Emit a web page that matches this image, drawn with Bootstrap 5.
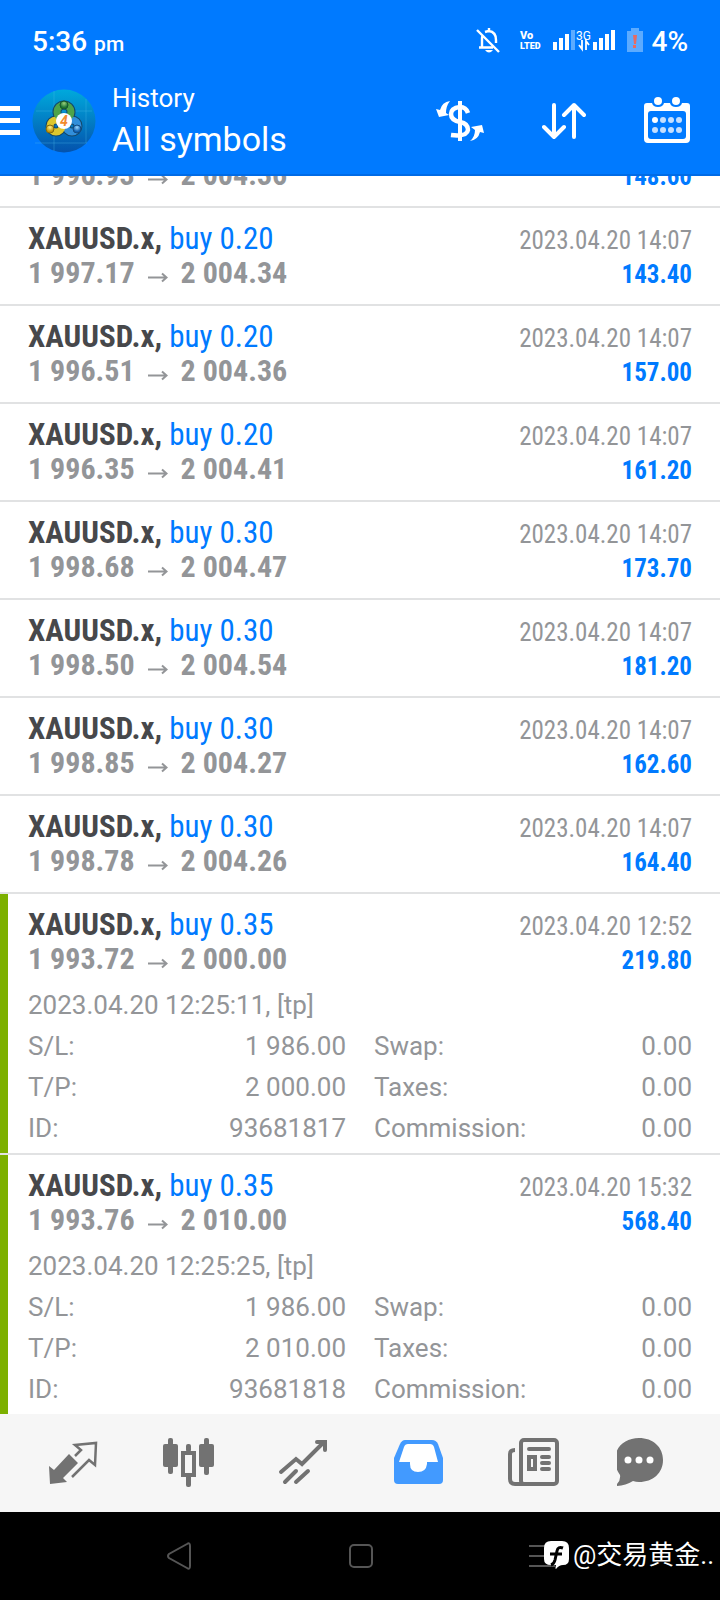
<!DOCTYPE html>
<html lang="en">
<head>
<meta charset="utf-8">
<meta name="viewport" content="width=device-width, initial-scale=1">
<title>History</title>
<link href="https://cdn.jsdelivr.net/npm/bootstrap@5.3.0/dist/css/bootstrap.min.css" rel="stylesheet">
<style>
  body { font-family: Roboto, "Noto Sans CJK SC", sans-serif; color: #939598; background: #fff; }
  svg { display: block; flex: none; }
  button { border: 0; padding: 0; background: none; color: inherit; }

  .app-head { background: #007aff; border-bottom: 2px solid #006be6; }
  .status { padding: 25px 32px 21px; font-size: 28px; line-height: 34px; font-weight: 500; }
  .status small { font-size: 21px; line-height: 1; }
  .titlebar { padding: 0 30px 12px 0; }
  .screen-name { font-size: 26px; line-height: 36px; }
  .filter-name { font-size: 34px; line-height: 46px; }
  .tools { gap: 58px; }

  .deals { flex: 1 1 0; min-height: 0; }
  .deal { border-bottom: 2px solid #e1e2e3; flex: none; }
  .deal:last-child { border-bottom: 0; }
  .deal-body { padding: 14px 28px; }
  .deal-line { font-family: "Roboto Condensed", "Liberation Sans Narrow", Roboto, sans-serif; font-size: 31px; line-height: 34px; height: 34px; }
  .deal-line strong { font-weight: 700; }
  .sym { color: #47484b; }
  .side { color: #007aff; }
  .deal-line .date, .deal-line .gain { font-size: 25px; }
  .gain { color: #007aff; }
  .price { display: flex; align-items: baseline; font-size: 30px; }
  .price svg { margin: 0 13px; }

  .closed-tp { border-left: 8px solid #7cb000; padding: 14px 28px 4px 20px; font-size: 26px; line-height: 41px; }
  .note { margin-top: 8px; line-height: 42px; }
  .facts { display: grid; grid-template-columns: 1fr 1fr; column-gap: 28px; margin: 0; }
  .facts dt { font-weight: 400; }
  .facts dd { margin: 0; }

  .tabs { background: #f6f6f6; padding: 20px 16px; color: #727272; }
  .tabs svg { height: 58px; width: 60px; }
  .tabs .current { color: #429aff; }

  .sys { background: #000; height: 88px; padding: 0 87px; color: #555; }
  .mark-tag { right: 6px; bottom: 25px; font-size: 26px; line-height: 40px; color: #fff; gap: 4px; }
</style>
</head>
<body>
<div class="vh-100 d-flex flex-column overflow-hidden">
  <header class="app-head text-white">
    <div class="status d-flex justify-content-between">
      <div>5:36 <small>pm</small></div>
      <div class="d-flex">
        <svg width="177" height="34" viewBox="474 25 177 34" aria-hidden="true">
          <g fill="none" stroke="#fff" stroke-width="2.4">
            <path d="M477 30 499 52M482 48V38Q482 36 483 35M485 32Q488 31 489 31 496 32 496 40V43M479 47.500H493M489 28V31"/>
          </g>
          <path d="M485 50H493Q489 55 485 50Z" fill="#fff"/>
          <g fill="#fff" font-family="Roboto, sans-serif" font-weight="900">
            <text x="520" y="39" font-size="11">Vo</text>
            <text x="520" y="49" font-size="9">LTED</text>
            <text x="576" y="40" font-size="12" font-weight="400">3G</text>
          </g>
          <path fill="#fff" d="M553 42h4v8h-4zM559 38h4v12h-4zM565 34h4v16h-4zM593 42h4v8h-4zM599 38h4v12h-4zM605 34h4v16h-4zM611 30h4v20h-4z"/>
          <path fill="#5cabff" d="M571 30h4v20h-4zM627 31h4v-3h8v3h4v21h-16z"/>
          <path fill="none" stroke="#fff" stroke-width="1.800" d="M582 40V49L579 45M586 50V41L589 45"/>
          <path fill="#e66b62" d="M633 35h4l-1 9h-2zM633 45h3v3h-3z"/>
        </svg>
        <span>4%</span>
      </div>
    </div>
    <div class="titlebar d-flex align-items-center">
      <button type="button" aria-label="Menu">
        <svg width="32" height="30" viewBox="0 0 32 30"><path fill="#fff" d="M0 0h20v5H0zM0 12h20v5H0zM0 24h20v5H0z"/></svg>
      </button>
      <svg width="64" height="64" viewBox="0 0 64 64" aria-hidden="true">
        <defs>
          <linearGradient id="sky" x1="0" y1="0" x2="0" y2="1"><stop offset="0" stop-color="#00a9dc"/><stop offset="1" stop-color="#0452ac"/></linearGradient>
          <radialGradient id="grn" cy=".3"><stop offset="0" stop-color="#9bd07c"/><stop offset="1" stop-color="#1c7535"/></radialGradient>
          <radialGradient id="yel" cy=".3"><stop offset="0" stop-color="#fff08a"/><stop offset="1" stop-color="#c59a0c"/></radialGradient>
          <radialGradient id="blu" cy=".3"><stop offset="0" stop-color="#9bd8ff"/><stop offset="1" stop-color="#0f62b4"/></radialGradient>
        </defs>
        <circle cx="32" cy="32" r="31.500" fill="url(#sky)"/>
        <path d="M4 22H60M3 54H55M22 2V62M54 10V54" stroke="#4bbbe4" stroke-opacity=".35"/>
        <g fill="none" stroke-width="9" stroke="#15486a">
          <circle cx="32" cy="23" r="7"/><circle cx="24" cy="37" r="6"/><circle cx="40" cy="37" r="6"/>
        </g>
        <circle cx="40" cy="37" r="6" fill="none" stroke="#318fdb" stroke-width="7"/>
        <circle cx="24" cy="37" r="6" fill="none" stroke="#ddc72e" stroke-width="7"/>
        <circle cx="32" cy="23" r="7" fill="none" stroke="#4ea34a" stroke-width="7"/>
        <circle cx="32" cy="16" r="4" fill="url(#grn)" stroke="#17562c"/>
        <circle cx="18" cy="40" r="4" fill="url(#yel)" stroke="#846a10"/>
        <circle cx="45" cy="40" r="4" fill="url(#blu)" stroke="#124b82"/>
        <circle cx="32" cy="32" r="8" fill="#fff"/>
        <text x="32" y="37" text-anchor="middle" font-family="Roboto, sans-serif" font-size="14" font-weight="700" font-style="italic" fill="#f28a2e">4</text>
      </svg>
      <div class="flex-grow-1 ps-3">
        <div class="screen-name">History</div>
        <div class="filter-name">All symbols</div>
      </div>
      <div class="tools d-flex align-items-center">
        <button type="button" aria-label="Currency">
          <svg width="48" height="48" viewBox="436 96 48 48">
            <g fill="none" stroke="#fff">
              <path d="M460 100V140" stroke-width="4"/>
              <path d="M468 112Q466 106 460 106 451 107 451 113C451 118 455 120 460 121 466 122 468 125 468 129 467 135 459 135 451 134 450 127" stroke-width="4.500"/>
            </g>
            <path fill="#fff" d="M450 100Q442 101 440 109L436 108 439 116 449 114 446 112Q446 105 450 100ZM470 140Q478 139 480 131L484 132 482 124 471 126 475 129Q475 136 470 140Z"/>
          </svg>
        </button>
        <button type="button" aria-label="Sort">
          <svg width="44" height="48" viewBox="542 96 44 48"><path fill="none" stroke="#fff" stroke-width="4" stroke-linecap="round" stroke-linejoin="round" d="M554 104V136M544 126 554 136 564 126M574 136V104M564 114 574 104 584 114"/></svg>
        </button>
        <button type="button" aria-label="Period">
          <svg width="46" height="48" viewBox="644 96 46 48">
            <path fill="#fff" fill-rule="evenodd" d="M647 102H652Q653 106 658 106T664 102H670Q671 106 676 106T682 102H687Q690 102 690 105V138Q690 142 686 142H648Q644 142 644 138V105Q644 102 647 102ZM651 110Q648 110 648 113V135Q648 138 651 138H683Q686 138 686 135V113Q686 110 683 110Z"/>
            <circle cx="658" cy="100" r="4" fill="#fff"/><circle cx="676" cy="100" r="4" fill="#fff"/>
            <circle cx="655" cy="119" r="3" fill="#fff"/>
            <g fill="#c4dfff"><circle cx="663" cy="119" r="3"/><circle cx="671" cy="119" r="3"/><circle cx="679" cy="119" r="3"/><circle cx="655" cy="129" r="3"/><circle cx="663" cy="129" r="3"/><circle cx="671" cy="129" r="3"/><circle cx="679" cy="129" r="3"/></g>
          </svg>
        </button>
      </div>
    </div>
  </header>

  <svg class="d-none" aria-hidden="true"><symbol id="to" viewBox="0 0 20 12"><path d="M0 6.500H18M14 2.500 18.500 6.500 14 10.500" fill="none" stroke="#939598" stroke-width="2"/></symbol></svg>

  <!-- Closed deals, scrolled to the newest one -->
  <ul class="deals list-unstyled mb-0 d-flex flex-column justify-content-end overflow-hidden">
    <li class="deal"><div class="deal-body">
      <div class="deal-line d-flex justify-content-between align-items-baseline"><span><strong class="sym">XAUUSD.x,</strong> <span class="side">buy 0.20</span></span><span class="date">2023.04.20 14:07</span></div>
      <div class="deal-line d-flex justify-content-between align-items-baseline"><strong class="price">1 996.93<svg width="20" height="12"><use href="#to"/></svg>2 004.36</strong><strong class="gain">148.60</strong></div>
    </div></li>
    <li class="deal"><div class="deal-body">
      <div class="deal-line d-flex justify-content-between align-items-baseline"><span><strong class="sym">XAUUSD.x,</strong> <span class="side">buy 0.20</span></span><span class="date">2023.04.20 14:07</span></div>
      <div class="deal-line d-flex justify-content-between align-items-baseline"><strong class="price">1 997.17<svg width="20" height="12"><use href="#to"/></svg>2 004.34</strong><strong class="gain">143.40</strong></div>
    </div></li>
    <li class="deal"><div class="deal-body">
      <div class="deal-line d-flex justify-content-between align-items-baseline"><span><strong class="sym">XAUUSD.x,</strong> <span class="side">buy 0.20</span></span><span class="date">2023.04.20 14:07</span></div>
      <div class="deal-line d-flex justify-content-between align-items-baseline"><strong class="price">1 996.51<svg width="20" height="12"><use href="#to"/></svg>2 004.36</strong><strong class="gain">157.00</strong></div>
    </div></li>
    <li class="deal"><div class="deal-body">
      <div class="deal-line d-flex justify-content-between align-items-baseline"><span><strong class="sym">XAUUSD.x,</strong> <span class="side">buy 0.20</span></span><span class="date">2023.04.20 14:07</span></div>
      <div class="deal-line d-flex justify-content-between align-items-baseline"><strong class="price">1 996.35<svg width="20" height="12"><use href="#to"/></svg>2 004.41</strong><strong class="gain">161.20</strong></div>
    </div></li>
    <li class="deal"><div class="deal-body">
      <div class="deal-line d-flex justify-content-between align-items-baseline"><span><strong class="sym">XAUUSD.x,</strong> <span class="side">buy 0.30</span></span><span class="date">2023.04.20 14:07</span></div>
      <div class="deal-line d-flex justify-content-between align-items-baseline"><strong class="price">1 998.68<svg width="20" height="12"><use href="#to"/></svg>2 004.47</strong><strong class="gain">173.70</strong></div>
    </div></li>
    <li class="deal"><div class="deal-body">
      <div class="deal-line d-flex justify-content-between align-items-baseline"><span><strong class="sym">XAUUSD.x,</strong> <span class="side">buy 0.30</span></span><span class="date">2023.04.20 14:07</span></div>
      <div class="deal-line d-flex justify-content-between align-items-baseline"><strong class="price">1 998.50<svg width="20" height="12"><use href="#to"/></svg>2 004.54</strong><strong class="gain">181.20</strong></div>
    </div></li>
    <li class="deal"><div class="deal-body">
      <div class="deal-line d-flex justify-content-between align-items-baseline"><span><strong class="sym">XAUUSD.x,</strong> <span class="side">buy 0.30</span></span><span class="date">2023.04.20 14:07</span></div>
      <div class="deal-line d-flex justify-content-between align-items-baseline"><strong class="price">1 998.85<svg width="20" height="12"><use href="#to"/></svg>2 004.27</strong><strong class="gain">162.60</strong></div>
    </div></li>
    <li class="deal"><div class="deal-body">
      <div class="deal-line d-flex justify-content-between align-items-baseline"><span><strong class="sym">XAUUSD.x,</strong> <span class="side">buy 0.30</span></span><span class="date">2023.04.20 14:07</span></div>
      <div class="deal-line d-flex justify-content-between align-items-baseline"><strong class="price">1 998.78<svg width="20" height="12"><use href="#to"/></svg>2 004.26</strong><strong class="gain">164.40</strong></div>
    </div></li>
    <li class="deal"><div class="closed-tp">
      <div class="deal-line d-flex justify-content-between align-items-baseline"><span><strong class="sym">XAUUSD.x,</strong> <span class="side">buy 0.35</span></span><span class="date">2023.04.20 12:52</span></div>
      <div class="deal-line d-flex justify-content-between align-items-baseline"><strong class="price">1 993.72<svg width="20" height="12"><use href="#to"/></svg>2 000.00</strong><strong class="gain">219.80</strong></div>
      <div class="note">2023.04.20 12:25:11, [tp]</div>
      <dl class="facts">
        <div class="d-flex justify-content-between"><dt>S/L:</dt><dd>1 986.00</dd></div>
        <div class="d-flex justify-content-between"><dt>Swap:</dt><dd>0.00</dd></div>
        <div class="d-flex justify-content-between"><dt>T/P:</dt><dd>2 000.00</dd></div>
        <div class="d-flex justify-content-between"><dt>Taxes:</dt><dd>0.00</dd></div>
        <div class="d-flex justify-content-between"><dt>ID:</dt><dd>93681817</dd></div>
        <div class="d-flex justify-content-between"><dt>Commission:</dt><dd>0.00</dd></div>
      </dl>
    </div></li>
    <li class="deal"><div class="closed-tp">
      <div class="deal-line d-flex justify-content-between align-items-baseline"><span><strong class="sym">XAUUSD.x,</strong> <span class="side">buy 0.35</span></span><span class="date">2023.04.20 15:32</span></div>
      <div class="deal-line d-flex justify-content-between align-items-baseline"><strong class="price">1 993.76<svg width="20" height="12"><use href="#to"/></svg>2 010.00</strong><strong class="gain">568.40</strong></div>
      <div class="note">2023.04.20 12:25:25, [tp]</div>
      <dl class="facts">
        <div class="d-flex justify-content-between"><dt>S/L:</dt><dd>1 986.00</dd></div>
        <div class="d-flex justify-content-between"><dt>Swap:</dt><dd>0.00</dd></div>
        <div class="d-flex justify-content-between"><dt>T/P:</dt><dd>2 010.00</dd></div>
        <div class="d-flex justify-content-between"><dt>Taxes:</dt><dd>0.00</dd></div>
        <div class="d-flex justify-content-between"><dt>ID:</dt><dd>93681818</dd></div>
        <div class="d-flex justify-content-between"><dt>Commission:</dt><dd>0.00</dd></div>
      </dl>
    </div></li>
  </ul>

  <nav class="tabs d-flex justify-content-around" aria-label="Sections">
    <button type="button" aria-label="Quotes">
      <svg viewBox="43 1434 60 58">
        <path fill="currentColor" d="M49 1466 54 1470 69 1454 78 1463 63 1478 67 1482 50 1484Z"/>
        <path fill="none" stroke="currentColor" stroke-width="2.500" d="M75 1456 81 1450 75 1445 96 1443 95 1465 89 1460 72 1477"/>
      </svg>
    </button>
    <button type="button" aria-label="Charts">
      <svg viewBox="158 1434 60 58">
        <g fill="currentColor"><rect x="163" y="1444" width="15" height="23" rx="2"/><rect x="168" y="1438" width="5" height="36" rx="2"/><rect x="199" y="1444" width="15" height="23" rx="2"/><rect x="204" y="1438" width="5" height="37" rx="2"/><rect x="186" y="1444" width="5" height="8" rx="2"/><rect x="186" y="1475" width="5" height="12" rx="2"/></g>
        <rect x="183" y="1453" width="11" height="22" fill="none" stroke="currentColor" stroke-width="4"/>
      </svg>
    </button>
    <button type="button" aria-label="Trade">
      <svg viewBox="273 1434 60 58"><g fill="none" stroke="currentColor" stroke-width="4"><path stroke-linecap="round" d="M281 1472 296 1459 302 1464 322 1444M285 1482 296 1471M296 1482 308 1471"/><path stroke-linecap="round" d="M317 1442H325V1450"/></g></svg>
    </button>
    <button type="button" class="current" aria-label="History" aria-current="page">
      <svg viewBox="387 1434 60 58">
        <path fill="currentColor" fill-rule="evenodd" d="M405 1440H432Q436 1440 438 1444L443 1458V1480Q443 1484 439 1484H398Q394 1484 394 1480V1458L400 1444Q402 1440 405 1440Z"/>
        <path fill="#fff" d="M408 1444H430Q433 1444 434 1447L438 1462H427V1464Q426 1472 418 1472T410 1464V1462H399L404 1447Q405 1444 408 1444Z"/>
      </svg>
    </button>
    <button type="button" aria-label="News">
      <svg viewBox="502 1434 60 58">
        <g fill="none" stroke="currentColor" stroke-width="4">
          <rect x="521" y="1440" width="36" height="44" rx="3"/>
          <path d="M515 1450Q510 1450 510 1454V1479Q510 1484 515 1484H524"/>
          <path d="M529 1449H549M542 1457H549M542 1463H549M542 1469H549" stroke-linecap="round"/>
          <rect x="529" y="1457" width="6" height="12" />
        </g>
      </svg>
    </button>
    <button type="button" aria-label="Messages">
      <svg viewBox="617 1434 60 58">
        <path fill="currentColor" d="M639 1438C653 1438 663 1447 663 1460S653 1482 639 1482Q636 1482 633 1481 625 1486 615 1486 621 1481 620 1475 615 1468 615 1460C615 1447 625 1438 639 1438Z"/>
        <g fill="#fff"><circle cx="628" cy="1460" r="3.500"/><circle cx="639" cy="1460" r="3.500"/><circle cx="650" cy="1460" r="3.500"/></g>
      </svg>
    </button>
  </nav>

  <div class="sys d-flex justify-content-around align-items-center position-relative">
    <button type="button" aria-label="Back"><svg width="28" height="28" viewBox="0 0 28 28"><path d="M22 2Q25 0 25 4V24Q25 28 22 26L4 16Q2 14 4 12Z" fill="none" stroke="currentColor" stroke-width="2"/></svg></button>
    <button type="button" aria-label="Home"><svg width="24" height="24" viewBox="0 0 24 24"><rect x="1" y="1" width="22" height="22" rx="4" fill="none" stroke="currentColor" stroke-width="2"/></svg></button>
    <button type="button" aria-label="Recent apps"><svg width="26" height="24" viewBox="0 0 26 24"><path d="M0 2H26M0 12H26M0 22H26" stroke="currentColor" stroke-width="2"/></svg></button>
    <div class="mark-tag position-absolute d-flex align-items-center">
      <svg width="25" height="28" viewBox="0 0 25 28" aria-hidden="true">
        <path fill="#fff" d="M7 0H18Q25 0 25 7V18Q25 24 19 24 15 24 12 28 11 28 12 24H7Q0 24 0 18V7Q0 0 7 0Z"/>
        <path fill="none" stroke="#000" stroke-width="3" d="M19 7Q14 5 13 10L11 19Q10 23 7 24M6 13H18"/>
      </svg>
      <span>@交易黄金..</span>
    </div>
  </div>
</div>
<script src="https://cdn.jsdelivr.net/npm/bootstrap@5.3.0/dist/js/bootstrap.bundle.min.js"></script>
</body>
</html>
